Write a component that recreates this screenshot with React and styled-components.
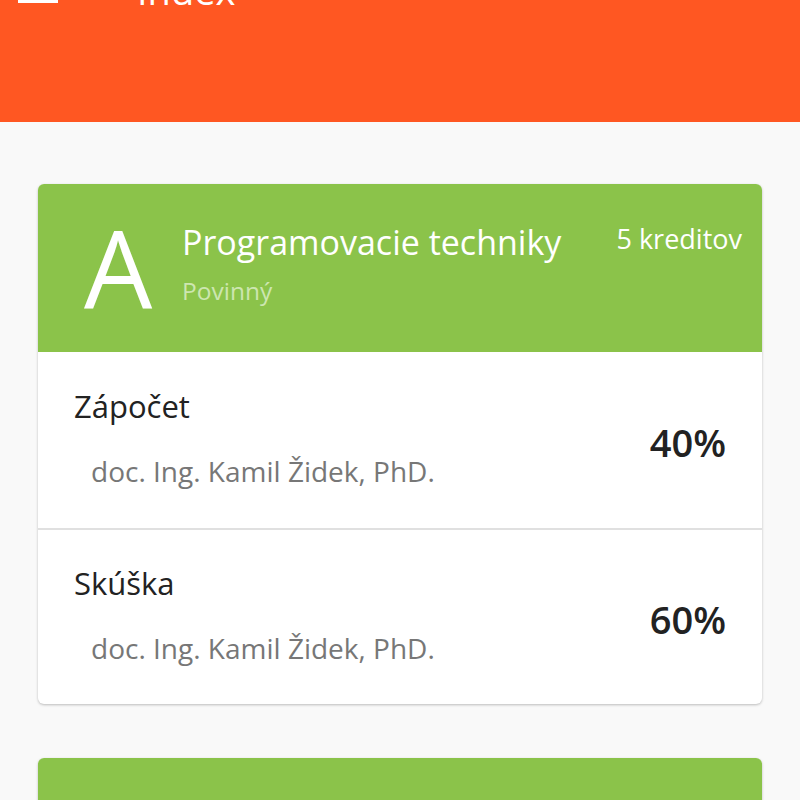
import React from 'react';
import styled, { createGlobalStyle } from 'styled-components';

const GlobalStyle = createGlobalStyle`
  html, body {
    margin: 0;
    padding: 0;
    background: #f9f9f9;
    font-family: "Open Sans", "Noto Sans", sans-serif;
    overflow: hidden;
  }
`;

const subjects = [
  {
    grade: 'A',
    name: 'Programovacie techniky',
    type: 'Povinný',
    credits: '5 kreditov',
    parts: [
      { name: 'Zápočet', teacher: 'doc. Ing. Kamil Židek, PhD.', share: '40%' },
      { name: 'Skúška', teacher: 'doc. Ing. Kamil Židek, PhD.', share: '60%' },
    ],
  },
  {
    grade: 'B',
    name: 'Fyzika',
    type: 'Povinný',
    credits: '5 kreditov',
    parts: [
      { name: 'Zápočet', teacher: 'doc. Ing. Kamil Židek, PhD.', share: '40%' },
    ],
  },
];

function App() {
  return (
    <Page>
      <GlobalStyle />
      <Header>
        <Toolbar>
          <Hamburger>
            <span />
            <span />
            <span />
          </Hamburger>
          <Title>Index</Title>
        </Toolbar>
      </Header>

      <List>
        {subjects.map((s) => (
          <Card key={s.name}>
            <CardHead>
              <Grade>{s.grade}</Grade>
              <HeadInfo>
                <SubjectName>{s.name}</SubjectName>
                <SubjectType>{s.type}</SubjectType>
              </HeadInfo>
              <Credits>{s.credits}</Credits>
            </CardHead>
            {s.parts.map((p) => (
              <PartRow key={p.name}>
                <PartInfo>
                  <PartName>{p.name}</PartName>
                  <Teacher>{p.teacher}</Teacher>
                </PartInfo>
                <Share>{p.share}</Share>
              </PartRow>
            ))}
          </Card>
        ))}
      </List>
    </Page>
  );
}

export default App;

const Page = styled.div`
  width: 800px;
  height: 800px;
  overflow: hidden;
  background: #f9f9f9;
`;

const Header = styled.header`
  height: 170px;
  margin-top: -48px;
  background: #ff5722;
  padding: 0 18px;
  box-sizing: border-box;
`;

const Toolbar = styled.div`
  display: flex;
  align-items: center;
  height: 76px;
`;

const Hamburger = styled.div`
  width: 40px;
  display: flex;
  flex-direction: column;
  gap: 8px;
  & > span {
    display: block;
    height: 3px;
    background: #ffffff;
  }
`;

const Title = styled.h1`
  margin: 0 0 0 79px;
  font-size: 38px;
  line-height: 38px;
  font-weight: 400;
  color: #ffffff;
`;

const List = styled.div`
  padding: 62px 38px;
  display: flex;
  flex-direction: column;
  gap: 54px;
`;

const Card = styled.div`
  background: #ffffff;
  border-radius: 6px;
  overflow: hidden;
  box-shadow: 0 1px 3px rgba(0, 0, 0, 0.18), 0 1px 2px rgba(0, 0, 0, 0.08);
`;

const CardHead = styled.div`
  height: 168px;
  background: #8bc34a;
  display: flex;
  align-items: flex-start;
  padding: 0 20px 0 46px;
  box-sizing: border-box;
`;

const Grade = styled.div`
  width: 98px;
  font-size: 108px;
  line-height: 108px;
  margin-top: 30px;
  color: #ffffff;
  font-weight: 400;
`;

const HeadInfo = styled.div`
  flex: 1;
  padding-top: 38px;
  display: flex;
  flex-direction: column;
  gap: 13px;
`;

const SubjectName = styled.div`
  font-size: 34px;
  line-height: 40px;
  color: #ffffff;
`;

const SubjectType = styled.div`
  font-size: 24.5px;
  line-height: 32px;
  color: #cde6b0;
`;

const Credits = styled.div`
  padding-top: 39px;
  font-size: 27px;
  line-height: 32px;
  color: #ffffff;
`;

const PartRow = styled.div`
  height: 176px;
  display: flex;
  align-items: center;
  padding: 0 36px;
  box-sizing: border-box;
  & + & {
    border-top: 2px solid #e0e0e0;
  }
`;

const PartInfo = styled.div`
  flex: 1;
  display: flex;
  flex-direction: column;
  gap: 29px;
  margin-top: -3px;
`;

const PartName = styled.div`
  font-size: 31px;
  line-height: 36px;
  color: #222222;
`;

const Teacher = styled.div`
  padding-left: 17px;
  font-size: 28px;
  line-height: 36px;
  color: #777777;
`;

const Share = styled.div`
  font-size: 38px;
  font-weight: 600;
  color: #222222;
  margin-top: 4px;
`;
